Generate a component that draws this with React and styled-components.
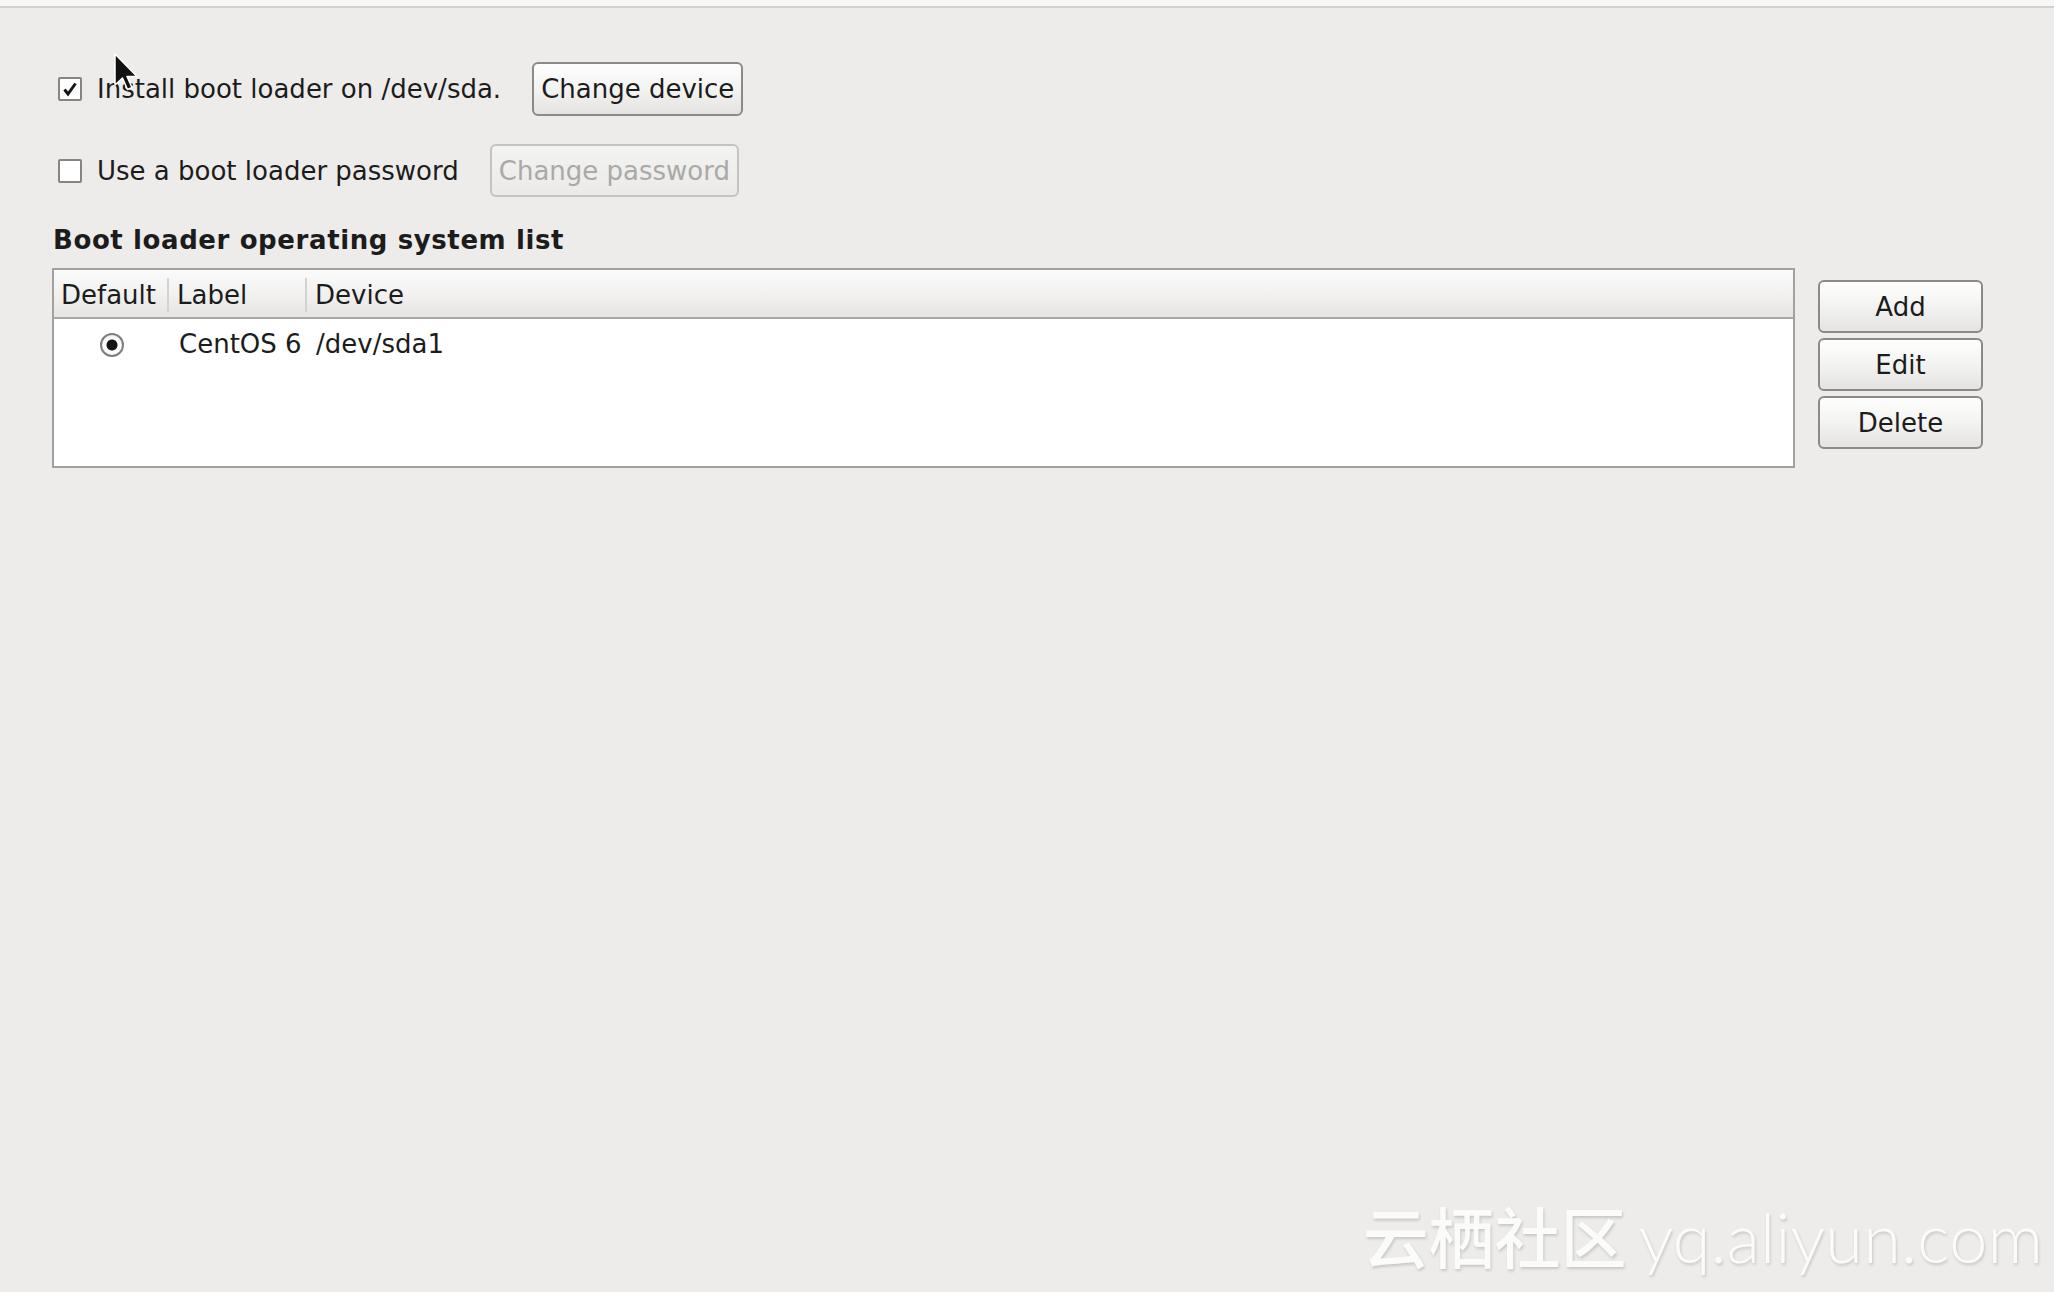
import React from "react";
import styled, { createGlobalStyle } from "styled-components";

const GlobalStyle = createGlobalStyle`
  html, body {
    margin: 0;
    padding: 0;
  }
  body {
    background: #edeceb;
    font-family: "DejaVu Sans", "Liberation Sans", sans-serif;
    font-size: 26px;
    color: #1c1c1c;
  }
`;

const Page = styled.div`
  position: relative;
  width: 2054px;
  height: 1292px;
  overflow: hidden;
  background: #edeceb;
`;

const TopStrip = styled.div`
  height: 6px;
  background: #f6f6f5;
  border-bottom: 2px solid #d2d1cf;
`;

const Content = styled.div`
  display: flex;
  flex-direction: column;
  padding: 54px 71px 0 52px;
`;

const OptionRow = styled.div`
  display: flex;
  align-items: center;
  height: ${({ $h }) => $h || 54}px;
  margin-top: ${({ $top }) => $top || 0}px;
  padding-left: 6px;
`;

const Box = styled.span`
  display: inline-flex;
  align-items: center;
  justify-content: center;
  width: 20px;
  height: 20px;
  border: 2px solid #868583;
  border-radius: 2px;
  background: #fff;
  margin-right: 15px;
`;

const OptionLabel = styled.span`
  line-height: 30px;
  margin-right: 31px;
`;

const Button = styled.button`
  font-family: "DejaVu Sans", "Liberation Sans", sans-serif;
  font-size: 26px;
  height: ${({ $h }) => $h || 54}px;
  width: ${({ $w }) => ($w ? `${$w}px` : "auto")};
  padding: 0 7px;
  border: 2px solid ${({ disabled }) => (disabled ? "#c4c3c0" : "#8c8a87")};
  border-radius: 6px;
  color: ${({ disabled }) => (disabled ? "#aaa9a6" : "#1c1c1c")};
  background: ${({ disabled }) =>
    disabled
      ? "linear-gradient(#f3f3f2, #ebeae8)"
      : "linear-gradient(#fefefe, #f3f3f2 50%, #e4e3e1)"};
  box-sizing: border-box;
  cursor: default;
`;

const SectionTitle = styled.div`
  font-weight: bold;
  line-height: 30px;
  letter-spacing: 0.6px;
  margin-top: 28px;
  margin-left: 1px;
`;

const ListArea = styled.div`
  display: flex;
  align-items: flex-start;
  gap: 23px;
  margin-top: 13px;
`;

const Table = styled.div`
  flex: 1;
  height: 200px;
  box-sizing: border-box;
  border: 2px solid #a3a19e;
  background: #fff;
`;

const columns = "113px 138px 1fr";

const HeaderRow = styled.div`
  display: grid;
  grid-template-columns: ${columns};
  height: 49px;
  box-sizing: border-box;
  border-bottom: 2px solid #a9a7a4;
  background: linear-gradient(#fbfbfb, #f1f0ef 55%, #e5e4e2);
`;

const HeaderCell = styled.div`
  display: flex;
  align-items: center;
  margin: 8px 0 5px;
  padding-left: ${({ $sep }) => ($sep ? 8 : 7)}px;
  border-left: ${({ $sep }) => ($sep ? "2px solid #d3d2d0" : "none")};
  line-height: 30px;
`;

const BodyRow = styled.div`
  display: grid;
  grid-template-columns: ${columns};
  height: 50px;
  align-items: center;
`;

const Cell = styled.div`
  display: flex;
  align-items: center;
  justify-content: ${({ $center }) => ($center ? "center" : "flex-start")};
  padding-left: ${({ $pad }) => $pad || 0}px;
  line-height: 30px;
`;

const Radio = styled.span`
  width: 20px;
  height: 20px;
  border-radius: 50%;
  border: 2px solid #7f7e7c;
  background: radial-gradient(circle, #151515 0 5px, #fff 6px, #eeeeed 100%);
  margin-left: 2px;
  margin-top: 1px;
`;

const SideButtons = styled.div`
  display: flex;
  flex-direction: column;
  gap: 5px;
  padding-top: 12px;
`;

const Watermark = styled.div`
  position: absolute;
  right: 11px;
  bottom: 10px;
  display: flex;
  align-items: baseline;
  gap: 12px;
  color: #fbfbfa;
  text-shadow: 1px 2px 3px rgba(0, 0, 0, 0.16);
  pointer-events: none;
`;

const MarkCjk = styled.span`
  font-family: "Noto Sans CJK SC", sans-serif;
  font-size: 66px;
  font-weight: 500;
`;

const MarkLatin = styled.span`
  font-family: Lato, "Open Sans", sans-serif;
  font-weight: 300;
  font-size: 69px;
`;

const Pointer = styled.svg`
  position: absolute;
  left: 114px;
  top: 53px;
`;

const Check = () => (
  <svg width="16" height="16" viewBox="0 0 16 16">
    <path d="M2.5 8.5 L6 13 L13.5 2.5" fill="none" stroke="#151515" strokeWidth="3" />
  </svg>
);

export default function App() {
  return (
    <Page>
      <GlobalStyle />
      <TopStrip />
      <Content>
        <OptionRow>
          <Box>
            <Check />
          </Box>
          <OptionLabel>Install boot loader on /dev/sda.</OptionLabel>
          <Button>Change device</Button>
        </OptionRow>
        <OptionRow $top={28} $h={53}>
          <Box />
          <OptionLabel>Use a boot loader password</OptionLabel>
          <Button disabled $h={53}>
            Change password
          </Button>
        </OptionRow>

        <SectionTitle>Boot loader operating system list</SectionTitle>

        <ListArea>
          <Table>
            <HeaderRow>
              <HeaderCell>Default</HeaderCell>
              <HeaderCell $sep>Label</HeaderCell>
              <HeaderCell $sep>Device</HeaderCell>
            </HeaderRow>
            <BodyRow>
              <Cell $center>
                <Radio />
              </Cell>
              <Cell $pad={12}>CentOS 6</Cell>
              <Cell $pad={11}>/dev/sda1</Cell>
            </BodyRow>
          </Table>
          <SideButtons>
            <Button $w={165} $h={53}>Add</Button>
            <Button $w={165} $h={53}>Edit</Button>
            <Button $w={165} $h={53}>Delete</Button>
          </SideButtons>
        </ListArea>
      </Content>

      <Pointer width="26" height="40" viewBox="0 0 26 40">
        <path
          d="M1 1 L1 32 L8.5 25 L13.5 36.5 L18 34.5 L13 23.5 L23 23.5 Z"
          fill="#111"
          stroke="#fff"
          strokeWidth="1.5"
          strokeLinejoin="round"
        />
      </Pointer>

      <Watermark>
        <MarkCjk>云栖社区</MarkCjk>
        <MarkLatin>yq.aliyun.com</MarkLatin>
      </Watermark>
    </Page>
  );
}
